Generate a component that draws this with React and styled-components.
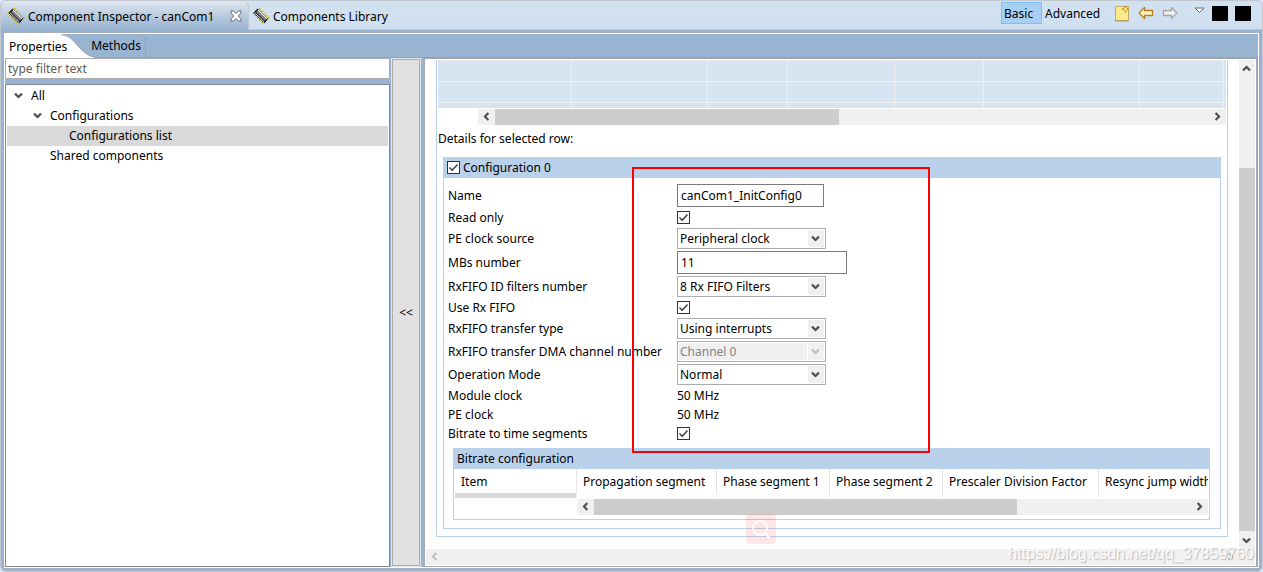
import React from "react";
import styled, { createGlobalStyle } from "styled-components";

const BLUE = "#99b4d1";
const GROUP = "#b9d1ea";
const LINE = "#a0a0a0";

const GlobalStyle = createGlobalStyle`
  *, *::before, *::after { box-sizing: border-box; }
  body { margin: 0; background: #dfe6f3; }
  body, button, input, select, table {
    font-family: "Noto Sans", "Open Sans", sans-serif;
    font-size: 12px;
    line-height: 17px;
    color: #000;
  }
  button { border: 0; padding: 0; background: none; }
`;

const Window = styled.div`
  position: relative;
  min-height: 100vh;
  display: flex;
  flex-direction: column;
  border: 1px solid #c3c8d0;
  border-radius: 6px;
  background: ${BLUE};
  overflow: hidden;
`;

const TitleBar = styled.header`
  display: flex;
  height: 29px;
  background: linear-gradient(#d3e2f1, #cfdff0);
`;

const ViewTab = styled.div`
  display: flex;
  align-items: center;
  gap: 3px;
  min-width: ${(p) => (p.$active ? "248px" : "0")};
  padding: ${(p) => (p.$active ? "2px 6px 0 6px" : "2px 6px 0 3px")};
  border-bottom: 1px solid ${(p) => (p.$active ? BLUE : "#c3c8d0")};
  border-right: 1px solid ${(p) => (p.$active ? "#c3c8d0" : "transparent")};
  border-radius: ${(p) => (p.$active ? "0 6px 0 0" : "0")};
  background: ${(p) => (p.$active ? `linear-gradient(#dfe6ef, ${BLUE})` : "none")};
  white-space: nowrap;
`;

const CloseButton = styled.button`
  display: flex;
  margin-left: auto;
`;

const Toolbar = styled.div`
  flex: 1;
  display: flex;
  justify-content: flex-end;
  align-items: flex-start;
  padding: 1px 11px 0 0;
  border-bottom: 1px solid #c3c8d0;
`;

const ModeButton = styled.button`
  height: 22px;
  padding: 0 2px;
  width: ${(p) => (p.$on ? "41px" : "68px")};
  text-align: left;
  border: 1px solid ${(p) => (p.$on ? "#7fbdf3" : "transparent")};
  background: ${(p) => (p.$on ? "#a7d0f4" : "none")};
`;

const IconButton = styled.button`
  display: flex;
  align-items: center;
  justify-content: center;
  width: 24px;
  height: 22px;
`;

const MenuButton = styled(IconButton)`
  width: 11px;
  height: 16px;
  margin-left: 12px;
`;

const SquareButton = styled.button`
  width: 16px;
  height: 15px;
  margin: 4px 0 0 7px;
  background: #000;
`;

const Frame = styled.div`
  flex: 1;
  display: flex;
  flex-direction: column;
  margin: 2px;
  border: 1px solid #a9afb9;
  outline: 1px solid #fff;
  outline-offset: -2px;
  padding: 1px;
`;

const PageTabs = styled.nav`
  display: flex;
  height: 24px;
  border-bottom: 1px solid ${LINE};
`;

const ActivePageTab = styled.button`
  position: relative;
  width: 81px;
  height: 24px;
  padding-left: 4px;
  text-align: left;
  svg { position: absolute; left: 0; top: 0; }
  span { position: relative; }
`;

const PageTab = styled.button`
  position: relative;
  width: 60px;
  height: 23px;
  text-align: right;
  padding-right: 4px;
  border-right: 1px solid #8fa3bb;
  border-top-right-radius: 7px;
`;

const Panes = styled.main`
  flex: 1;
  display: flex;
`;

const Sidebar = styled.aside`
  width: 385px;
  display: flex;
  flex-direction: column;
  gap: 5px;
`;

const FilterInput = styled.input`
  width: 100%;
  height: 21px;
  padding: 0 2px;
  border: 1px solid #abadb3;
  background: #fff;
  outline: none;
  &::placeholder { color: #5a5a5a; opacity: 1; }
`;

const Tree = styled.ul`
  flex: 1;
  margin: 0;
  padding: 1px;
  list-style: none;
  border: 1px solid #828790;
  background: #fff;
`;

const TreeItem = styled.li`
  display: flex;
  align-items: center;
  height: 20px;
  padding-bottom: 2px;
  padding-left: ${(p) => 5 + p.$level * 19}px;
  background: ${(p) => (p.$selected ? "#d9d9d9" : "none")};
`;

const Twisty = styled.span`
  display: flex;
  justify-content: center;
  width: 13px;
  margin-right: 6px;
`;

const CollapseButton = styled.button`
  width: 28px;
  margin: 1px 4px 1px 2px;
  border: 1px solid #adadad;
  outline: 1px solid #dfe6ee;
  background: #e1e1e1;
`;

const Editor = styled.section`
  flex: 1;
  min-width: 0;
  display: flex;
  flex-direction: column;
  border: 1px solid #a3a8b2;
  border-right-width: 2px;
  background: #fff;
  padding: 1px;
`;

const EditorRow = styled.div`
  flex: 1;
  display: flex;
`;

const Content = styled.div`
  flex: 1;
  min-width: 0;
  padding: 0 11px 12px 10px;
`;

const OuterGroup = styled.div`
  border: 1px solid ${GROUP};
  border-top: 0;
  padding: 0 1px 7px;
`;

const GridTable = styled.table`
  width: 100%;
  table-layout: fixed;
  border-collapse: separate;
  border-spacing: 0;
  background: #d7e4f1;
  td {
    height: 21px;
    padding: 0;
    border-top: 1px solid #efefef;
    border-right: 1px solid #efefef;
  }
  td:last-child { border-right: 0; }
  tr:last-child td { height: 6px; }
`;

const Scroll = styled.div`
  display: flex;
  flex-direction: ${(p) => (p.$vertical ? "column" : "row")};
  ${(p) => (p.$vertical ? "width: 16px;" : "height: 16px;")}
  margin: ${(p) => p.$margin || 0};
  background: #f0f0f0;
`;

const ScrollArrow = styled.button`
  display: flex;
  align-items: center;
  justify-content: center;
  padding: ${(p) => (p.$vertical ? "0 1px 0 0" : "0 0 1px")};
  width: ${(p) => (p.$vertical ? "16px" : "17px")};
  height: ${(p) => (p.$vertical ? "17px" : "16px")};
`;

const Part = styled.div`
  flex: ${(p) => p.$grow} 0 0;
  background: ${(p) => (p.$thumb ? "#cdcdcd" : "none")};
`;

const DetailsLabel = styled.p`
  margin: 5px 0 10px;
`;

const Group = styled.section`
  margin: 0 5px;
  border: 1px solid ${GROUP};
  border-top: 0;
`;

const GroupHeader = styled.header`
  display: flex;
  align-items: center;
  gap: 3px;
  height: 21px;
  margin: 0 -1px;
  padding-left: 4px;
  background: ${GROUP};
  label { cursor: default; }
`;

const Form = styled.form`
  display: grid;
  grid-template-columns: 229px auto;
  justify-content: start;
  align-items: center;
  row-gap: 2px;
  margin: 6px 0 6px 4px;
  label, output, span { white-space: nowrap; }
`;

const TextInput = styled.input`
  width: ${(p) => p.$width}px;
  height: 23px;
  padding: 0 3px;
  border: 1px solid #7a7a7a;
  background: #fff;
  outline: none;
`;

const CheckCell = styled.span`
  display: flex;
  align-items: center;
  height: 17px;
`;

const Tick = styled.span`
  position: relative;
  display: flex;
  width: 13px;
  height: 13px;
  input {
    appearance: none;
    width: 13px;
    height: 13px;
    margin: 0;
    border: 1px solid #333;
    background: #fff;
  }
  svg { position: absolute; inset: 0; pointer-events: none; }
`;

const SelectBox = styled.span`
  position: relative;
  display: flex;
  width: 149px;
  select {
    appearance: none;
    width: 100%;
    height: 21px;
    padding: 0 18px 0 2px;
    border: 1px solid #abadb3;
    border-radius: 0;
    background: #fff;
    opacity: 1;
  }
  select:disabled { color: #838383; background: #f0f0f0; box-shadow: inset 0 0 0 1px #fff; }
`;

const SelectArrow = styled.span`
  position: absolute;
  top: 2px;
  right: 2px;
  width: 16px;
  height: 17px;
  padding-right: 1px;
  display: flex;
  align-items: center;
  justify-content: center;
  background: #f0f0f0;
  box-shadow: ${(p) => (p.$disabled ? "-1px 0 0 #fff" : "none")};
  pointer-events: none;
`;

const BitrateGroup = styled(Group)`
  margin: 0 10px 8px 9px;
  padding: 0 1px 4px;
  ${GroupHeader} { margin: 0 -2px; }
`;

const TableClip = styled.div`
  overflow: hidden;
`;

const BitrateTable = styled.table`
  width: 800px;
  table-layout: fixed;
  border-collapse: separate;
  border-spacing: 0;
  th {
    height: 24px;
    padding: 0 6px;
    font-weight: 400;
    text-align: left;
    white-space: nowrap;
    border-right: 1px solid #e3e3e3;
  }
  td { height: 5px; padding: 0; border-right: 1px solid #f0f0f0; }
  td:first-child { background: #d9d9d9; }
`;

const Highlight = styled.div`
  position: absolute;
  left: 631px;
  top: 166px;
  width: 298px;
  height: 286px;
  border: 2px solid #f00;
  pointer-events: none;
`;

const SearchBadge = styled.div`
  position: absolute;
  left: 745px;
  top: 513px;
  width: 30px;
  height: 30px;
  border-radius: 4px;
  background: rgba(245, 80, 80, 0.14);
  pointer-events: none;
`;

const Watermark = styled.div`
  position: absolute;
  right: 8px;
  bottom: 7px;
  font: 16px/20px "Liberation Sans", Arial, sans-serif;
  color: rgba(255, 255, 255, 0.9);
  text-shadow: 1px 1px 1px rgba(120, 120, 120, 0.45);
  pointer-events: none;
`;

const EditorFooter = styled.div`
  padding-right: 16px;
  background: #f0f0f0;
`;

const rotations = { down: 0, up: 180, left: 90, right: 270 };

function Chevron({ dir = "down", color = "#505050" }) {
  return (
    <svg width="9" height="9" viewBox="0 0 9 9" style={{ transform: `rotate(${rotations[dir]}deg)` }} aria-hidden="true">
      <path d="M1 2.600 L4.500 6 L8 2.600" fill="none" stroke={color} strokeWidth="2.200" />
    </svg>
  );
}

function ChipIcon() {
  return (
    <svg width="18" height="18" viewBox="0 0 18 18" aria-hidden="true">
      <path d="M7 1.500 L17 11.500 M1 5.500 L12 17" stroke="#c9b400" strokeWidth="2" strokeDasharray="1.800 1.300" />
      <path d="M5.500 2 L15.500 11.800 L12.500 15.800 L2 5.800 Z" fill="#2c2c34" stroke="#111" />
      <path d="M6 3 L14.800 11.700" stroke="#f4f4f6" strokeWidth="1.300" />
      <path d="M4.800 4.500 L13.500 13" stroke="#8d8d98" strokeWidth="1.600" />
      <path d="M2.800 5.800 L12 14.700" stroke="#e4e4ea" strokeWidth="0.900" />
    </svg>
  );
}

function NoteIcon() {
  return (
    <svg width="16" height="17" viewBox="0 0 16 17" aria-hidden="true">
      <path d="M1.500 1.500 H14.500 V15.500 H1.500 Z" fill="#fbe98c" stroke="#c4ad62" />
      <path d="M1.500 16 H14.500" stroke="#a9975c" />
      <path d="M11.500 0.800 L12.500 3.200 L15 4.200 L12.500 5.200 L11.500 7.600 L10.500 5.200 L8 4.200 L10.500 3.200 Z" fill="#fff3b0" stroke="#c09532" />
    </svg>
  );
}

function ArrowIcon({ forward }) {
  return (
    <svg width="16" height="14" viewBox="0 0 16 14" style={{ transform: forward ? "scaleX(-1)" : "none" }} aria-hidden="true">
      <path
        d="M1 7 L6.500 1.500 V4.500 H14.500 V9.500 H6.500 V12.500 Z"
        fill={forward ? "#efefef" : "#fff3bd"}
        stroke={forward ? "#a5a5a5" : "#b87d1c"}
        strokeWidth="1.300"
        strokeLinejoin="round"
      />
    </svg>
  );
}

function Checkbox({ id }) {
  return (
    <Tick>
      <input type="checkbox" id={id} defaultChecked />
      <svg width="13" height="13" viewBox="0 0 13 13" aria-hidden="true">
        <path d="M2.500 6.500 L5.200 9.200 L10.500 3.500" fill="none" stroke="#333" strokeWidth="1.300" />
      </svg>
    </Tick>
  );
}

function ScrollBar({ vertical, before = 0, thumb = 0, after = 0, muted, margin }) {
  const color = muted ? "#bfbfbf" : "#505050";
  return (
    <Scroll $vertical={vertical} $margin={margin}>
      <ScrollArrow type="button" $vertical={vertical} aria-label="Scroll back">
        <Chevron dir={vertical ? "up" : "left"} color={color} />
      </ScrollArrow>
      <Part $grow={before} />
      <Part $grow={thumb} $thumb={thumb > 0} />
      <Part $grow={after} />
      <ScrollArrow type="button" $vertical={vertical} aria-label="Scroll forward">
        <Chevron dir={vertical ? "down" : "right"} color={color} />
      </ScrollArrow>
    </Scroll>
  );
}

const tree = [
  { label: "All", level: 0, open: true },
  { label: "Configurations", level: 1, open: true },
  { label: "Configurations list", level: 2, selected: true },
  { label: "Shared components", level: 1 },
];

const fields = [
  { id: "name", label: "Name", kind: "text", value: "canCom1_InitConfig0", width: 147 },
  { id: "readonly", label: "Read only", kind: "check" },
  { id: "pesource", label: "PE clock source", kind: "select", value: "Peripheral clock" },
  { id: "mbs", label: "MBs number", kind: "text", value: "11", width: 170 },
  { id: "filters", label: "RxFIFO ID filters number", kind: "select", value: "8 Rx FIFO Filters" },
  { id: "usefifo", label: "Use Rx FIFO", kind: "check" },
  { id: "transfer", label: "RxFIFO transfer type", kind: "select", value: "Using interrupts" },
  { id: "dma", label: "RxFIFO transfer DMA channel number", kind: "select", value: "Channel 0", disabled: true },
  { id: "mode", label: "Operation Mode", kind: "select", value: "Normal" },
  { id: "module", label: "Module clock", kind: "output", value: "50 MHz" },
  { id: "peclock", label: "PE clock", kind: "output", value: "50 MHz" },
  { id: "segments", label: "Bitrate to time segments", kind: "check" },
];

const gridColumns = [134, 136, 80, 107, 89, 156, 84, 2];

const bitrateColumns = [
  ["Item", 122],
  ["Propagation segment", 140],
  ["Phase segment 1", 113],
  ["Phase segment 2", 113],
  ["Prescaler Division Factor", 156],
  ["Resync jump width", 156],
];

function Field({ field }) {
  const { id, kind, value, width, disabled } = field;
  if (kind === "text") return <TextInput id={id} type="text" defaultValue={value} $width={width} />;
  if (kind === "check") return <CheckCell><Checkbox id={id} /></CheckCell>;
  if (kind === "output") return <output id={id}>{value}</output>;
  return (
    <SelectBox>
      <select id={id} disabled={disabled} defaultValue={value}>
        <option>{value}</option>
      </select>
      <SelectArrow $disabled={disabled}><Chevron color={disabled ? "#bfbfbf" : "#505050"} /></SelectArrow>
    </SelectBox>
  );
}

export default function App() {
  return (
    <>
      <GlobalStyle />
      <Window>
        <TitleBar>
          <ViewTab $active>
            <ChipIcon />
            <span>Component Inspector - canCom1</span>
            <CloseButton type="button" aria-label="Close view">
              <svg width="12" height="12" viewBox="0 0 12 12" aria-hidden="true">
                <path d="M1 1 H3.500 L6 3.500 L8.500 1 H11 V3 L8.200 6 L11 9 V11 H8.500 L6 8.500 L3.500 11 H1 V9 L3.800 6 L1 3 Z" fill="#fff" stroke="#6b6b6b" />
              </svg>
            </CloseButton>
          </ViewTab>
          <ViewTab>
            <ChipIcon />
            <span>Components Library</span>
          </ViewTab>
          <Toolbar>
            <ModeButton type="button" $on>Basic</ModeButton>
            <ModeButton type="button">Advanced</ModeButton>
            <IconButton type="button" aria-label="New"><NoteIcon /></IconButton>
            <IconButton type="button" aria-label="Back"><ArrowIcon /></IconButton>
            <IconButton type="button" aria-label="Forward"><ArrowIcon forward /></IconButton>
            <MenuButton type="button" aria-label="View menu">
              <svg width="11" height="7" viewBox="0 0 11 7" aria-hidden="true">
                <path d="M1 1 H10 L5.500 5.500 Z" fill="#fff" stroke="#6b6b6b" />
              </svg>
            </MenuButton>
            <SquareButton type="button" aria-label="Minimize" />
            <SquareButton type="button" aria-label="Maximize" />
          </Toolbar>
        </TitleBar>
        <Frame>
          <PageTabs>
            <ActivePageTab type="button">
              <svg width="91" height="24" viewBox="0 0 91 24" aria-hidden="true">
                <path d="M0 0 H56 C72 2 72 20 91 24 H0 Z" fill="#fff" />
                <path d="M56 0.500 C72 2 72 20 91 23.500" fill="none" stroke={LINE} />
              </svg>
              <span>Properties</span>
            </ActivePageTab>
            <PageTab type="button">Methods</PageTab>
          </PageTabs>
          <Panes>
            <Sidebar>
              <FilterInput type="text" placeholder="type filter text" aria-label="Filter" />
              <Tree>
                {tree.map((t) => (
                  <TreeItem key={t.label} $level={t.level} $selected={t.selected}>
                    <Twisty>{t.open && <Chevron />}</Twisty>
                    {t.label}
                  </TreeItem>
                ))}
              </Tree>
            </Sidebar>
            <CollapseButton type="button">&lt;&lt;</CollapseButton>
            <Editor>
              <EditorRow>
                <Content>
                  <OuterGroup>
                    <GridTable aria-label="Configurations">
                      <colgroup>
                        {gridColumns.map((w, i) => <col key={i} style={{ width: `${(w / 788) * 100}%` }} />)}
                      </colgroup>
                      <tbody>
                        {[0, 1, 2].map((r) => (
                          <tr key={r}>{gridColumns.map((_, i) => <td key={i} />)}</tr>
                        ))}
                      </tbody>
                    </GridTable>
                    <ScrollBar margin="1px 0 0 40px" thumb={344} after={370} />
                    <DetailsLabel>Details for selected row:</DetailsLabel>
                    <Group>
                      <GroupHeader>
                        <Checkbox id="configuration" />
                        <label htmlFor="configuration">Configuration 0</label>
                      </GroupHeader>
                      <Form>
                        {fields.map((f) => (
                          <React.Fragment key={f.id}>
                            <label htmlFor={f.id}>{f.label}</label>
                            <Field field={f} />
                          </React.Fragment>
                        ))}
                      </Form>
                      <BitrateGroup>
                        <GroupHeader>Bitrate configuration</GroupHeader>
                        <TableClip>
                          <BitrateTable>
                            <colgroup>
                              {bitrateColumns.map(([n, w]) => <col key={n} style={{ width: w }} />)}
                            </colgroup>
                            <thead>
                              <tr>{bitrateColumns.map(([n]) => <th key={n} scope="col">{n}</th>)}</tr>
                            </thead>
                            <tbody>
                              <tr>{bitrateColumns.map(([n]) => <td key={n} />)}</tr>
                            </tbody>
                          </BitrateTable>
                        </TableClip>
                        <ScrollBar margin="1px 0 0 122px" thumb={423} after={174} />
                      </BitrateGroup>
                    </Group>
                  </OuterGroup>
                </Content>
                <ScrollBar vertical before={91} thumb={363} after={1} />
              </EditorRow>
              <EditorFooter>
                <ScrollBar muted after={1} />
              </EditorFooter>
            </Editor>
          </Panes>
        </Frame>
        <Highlight />
        <SearchBadge>
          <svg width="30" height="30" viewBox="0 0 30 30" aria-hidden="true">
            <circle cx="14" cy="14" r="7" fill="none" stroke="#fff" strokeWidth="1.500" />
            <path d="M19 19 L23 23" stroke="#fff" strokeWidth="2.500" strokeLinecap="round" />
          </svg>
        </SearchBadge>
        <Watermark>https://blog.csdn.net/qq_37859760</Watermark>
      </Window>
    </>
  );
}
